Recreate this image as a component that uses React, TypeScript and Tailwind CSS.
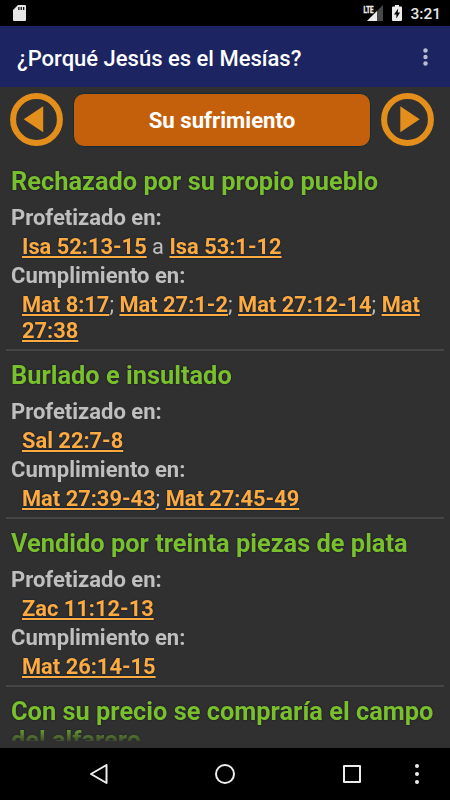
import { Fragment } from "react"

type Topic = {
  title: string
  prophecy?: string[]
  fulfilled?: string[]
  separator?: string
}

const topics: Topic[] = [
  {
    title: "Rechazado por su propio pueblo",
    prophecy: ["Isa 52:13-15", "Isa 53:1-12"],
    fulfilled: ["Mat 8:17", "Mat 27:1-2", "Mat 27:12-14", "Mat 27:38"],
    separator: " a ",
  },
  {
    title: "Burlado e insultado",
    prophecy: ["Sal 22:7-8"],
    fulfilled: ["Mat 27:39-43", "Mat 27:45-49"],
  },
  {
    title: "Vendido por treinta piezas de plata",
    prophecy: ["Zac 11:12-13"],
    fulfilled: ["Mat 26:14-15"],
  },
  { title: "Con su precio se compraría el campo del alfarero" },
]

function StatusBar() {
  return (
    <div className="flex h-[26px] shrink-0 items-center bg-black pl-[13px] pr-[9px]">
      <svg className="h-4 w-[13px]" viewBox="0 0 13 16" fill="#e6e6e6">
        <path d="M5 0h7a1 1 0 0 1 1 1v14a1 1 0 0 1-1 1H1a1 1 0 0 1-1-1V5z" />
        <path d="M5.2 2h1.3v3H5.2zM7.6 2h1.3v3H7.6zM10 2h1.3v3H10z" fill="#111" />
      </svg>
      <div className="ml-auto flex items-center">
        <svg className="h-4 w-5" viewBox="0 0 20 16">
          <path d="M20 0v16H4z" fill="#484848" />
          <path d="M14 6v10H4z" fill="#ececec" />
          <path d="M0 0h11v6.500L9 8.500H0z" fill="#000" />
          <text x="0.500" y="7.500" textLength="10" lengthAdjust="spacingAndGlyphs" fontSize="9.500" fontWeight="700" fill="#ececec" stroke="#ececec" strokeWidth="0.500">LTE</text>
        </svg>
        <svg className="ml-[9px] h-4 w-[10px]" viewBox="0 0 10 16">
          <path d="M3 0h4v1.500h2a1 1 0 0 1 1 1V15a1 1 0 0 1-1 1H1a1 1 0 0 1-1-1V2.500a1 1 0 0 1 1-1h2z" fill="#ececec" />
          <path d="M6.200 3.500L2 9.500h2.400V13.500L8 7.500H5.700z" fill="#000" />
        </svg>
        <span className="ml-[8px] pt-[3px] text-[15.500px] leading-none font-medium text-[#e6e6e6]">3:21</span>
      </div>
    </div>
  )
}

function AppBar() {
  return (
    <header className="flex h-[61px] shrink-0 items-center justify-between bg-[#1c2461] pl-[17px] pr-[22px]">
      <h1 className="pt-[3px] text-[22px] font-medium whitespace-nowrap text-white">¿Porqué Jesús es el Mesías?</h1>
      <svg className="h-[18px] w-[5px]" viewBox="0 0 5 18" fill="#bbbdcf">
        <circle cx="2.500" cy="2.500" r="2.200" />
        <circle cx="2.500" cy="9" r="2.200" />
        <circle cx="2.500" cy="15.500" r="2.200" />
      </svg>
    </header>
  )
}

function ArrowButton({ next = false }: { next?: boolean }) {
  return (
    <button type="button" aria-label={next ? "Siguiente" : "Anterior"} className="shrink-0">
      <svg className="block h-[53px] w-[53px]" viewBox="0 0 53 53" fill="#e48f1b">
        <circle cx="26.500" cy="26.500" r="23.400" fill="none" stroke="#e48f1b" strokeWidth="6" />
        {next ? <path d="M19.300 13.300v26L38.700 26.300z" /> : <path d="M33.200 13.300v26L13.700 26.300z" />}
      </svg>
    </button>
  )
}

function References({ items, separator = "; " }: { items: string[]; separator?: string }) {
  return (
    <p className="mt-[3px] pl-[11px] text-[21.850px] leading-[26px] text-[#bfbfbf]">
      {items.map((item, i) => (
        <Fragment key={item}>
          {i > 0 && separator}
          <a className="font-bold text-[#ffaa3f] underline decoration-[1.500px] underline-offset-[2px] [text-decoration-skip-ink:none] [text-shadow:0_0_2px_#001a33]">{item}</a>
        </Fragment>
      ))}
    </p>
  )
}

function TopicCard({ topic }: { topic: Topic }) {
  return (
    <section className="border-b-2 border-[#454545] px-[5px] pt-[10px] pb-[5px]">
      <h2 className="text-[25.400px] leading-[29px] font-bold text-[#78c02c] [text-shadow:0_0_2px_#180c28]">{topic.title}</h2>
      {topic.prophecy && (
        <>
          <h3 className="mt-[9px] text-[22px] leading-[26px] font-bold text-[#bfbfbf]">Profetizado en:</h3>
          <References items={topic.prophecy} separator={topic.separator} />
        </>
      )}
      {topic.fulfilled && (
        <>
          <h3 className="mt-[3px] text-[22px] leading-[26px] font-bold text-[#bfbfbf]">Cumplimiento en:</h3>
          <References items={topic.fulfilled} />
        </>
      )}
    </section>
  )
}

function NavigationBar() {
  return (
    <nav className="flex h-[52px] shrink-0 items-center bg-black pl-[90px] pr-[31px]">
      <svg className="h-5 w-[18px]" viewBox="0 0 18 20" fill="none" stroke="#ededed" strokeWidth="2" strokeLinejoin="round">
        <path d="M16.500 1v18L1 10z" />
      </svg>
      <svg className="ml-[107px] h-5 w-5" viewBox="0 0 20 20" fill="none" stroke="#ededed" strokeWidth="2">
        <circle cx="10" cy="10" r="9" />
      </svg>
      <svg className="ml-[107.500px] h-[18px] w-[18px]" viewBox="0 0 18 18" fill="none" stroke="#ededed" strokeWidth="2" strokeLinejoin="round">
        <path d="M1 1h16v16H1z" />
      </svg>
      <svg className="ml-auto h-5 w-[4px]" viewBox="0 0 4 20" fill="#ededed">
        <circle cx="2" cy="2" r="2" />
        <circle cx="2" cy="10" r="2" />
        <circle cx="2" cy="18" r="2" />
      </svg>
    </nav>
  )
}

export default function App() {
  return (
    <div className="flex h-[800px] w-[450px] flex-col overflow-hidden bg-[#303030] font-['Roboto',sans-serif]">
      <StatusBar />
      <AppBar />

      {/* Section picker */}
      <div className="flex h-[70px] shrink-0 items-start justify-between pt-[6px] pr-[16px] pl-[10px]">
        <ArrowButton />
        <div className="flex h-[54px] w-[298px] items-center justify-center rounded-[11px] border border-[#142c35] bg-[#c4600b] pt-px text-[22.200px] font-bold text-white">
          Su sufrimiento
        </div>
        <ArrowButton next />
      </div>

      <main className="mx-[6px] h-[584px] shrink-0 overflow-hidden [mask-image:linear-gradient(to_bottom,black_568px,transparent_588px)]">
        {topics.map((topic) => (
          <TopicCard key={topic.title} topic={topic} />
        ))}
      </main>
      <div className="h-[7px] shrink-0" />
      <NavigationBar />
    </div>
  )
}
